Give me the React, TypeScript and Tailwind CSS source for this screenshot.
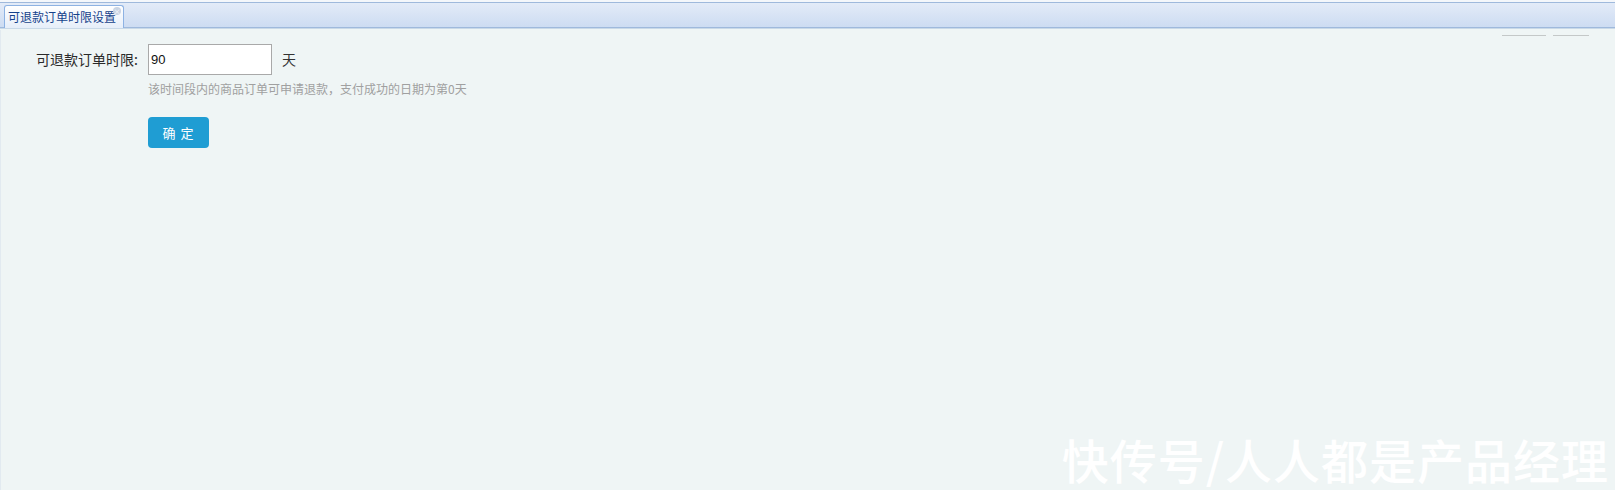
export default function App() {
  return (
    <div className="w-[1615px] h-[490px] bg-[#eff5f5] overflow-hidden relative" style={{ fontFamily: '"Noto Sans CJK SC", "Liberation Sans", sans-serif' }}>
      <div className="h-[2px] bg-[#f4f7fb]" />
      <div className="h-[26px] border-y border-[#9fb9dc] bg-gradient-to-b from-[#e3ebf8] to-[#cddcf2] flex items-end pl-[4px]">
        <div className="relative h-[23px] px-[3px] pr-[7px] bg-gradient-to-b from-[#ffffff] to-[#e6eef9] border border-b-0 border-[#8db2e3] rounded-t-[3px] flex items-center text-[12px] text-[#15428b] leading-none -mb-px">
          可退款订单时限设置
          <span className="absolute right-[2px] top-[1px] w-[8px] h-[8px] rounded-full bg-[#c9d4e4] text-[7px] leading-[8px] text-center text-white">×</span>
        </div>
      </div>
      <div className="h-px bg-[#c9d9e8]" />
      <div className="absolute top-[35px] left-[1502px] w-[44px] h-px bg-[#c4c8c8]" />
      <div className="absolute top-[35px] left-[1553px] w-[36px] h-px bg-[#c4c8c8]" />
      <div className="pt-[15px] flex flex-col">
        <div className="flex items-center h-[31px]">
          <label className="w-[139px] text-right pr-[1px] text-[14px] text-[#2a2a2a]">可退款订单时限:</label>
          <input
            defaultValue="90"
            className="ml-[9px] w-[124px] h-[31px] border border-[#a9a9a9] bg-white pl-[2px] text-[13px] text-[#111] outline-none"
            style={{ fontFamily: '"Liberation Sans", sans-serif' }}
          />
          <span className="ml-[10px] text-[14px] text-[#333]">天</span>
        </div>
        <div className="ml-[148px] mt-[5px] text-[12px] text-[#a0a0a0]">该时间段内的商品订单可申请退款，支付成功的日期为第0天</div>
        <div className="ml-[148px] mt-[19px]">
          <button className="w-[61px] h-[31px] rounded-[4px] bg-[#1f9dd3] text-white text-[13px] tracking-[1px]">确 定</button>
        </div>
      </div>
      <div className="absolute left-0 top-[30px] bottom-0 w-px bg-[#e2eaf0]" />
      <div className="absolute right-[6px] bottom-[5px] text-[47px] leading-[52px] tracking-[1px] text-white font-medium">快传号/人人都是产品经理</div>
    </div>
  )
}
